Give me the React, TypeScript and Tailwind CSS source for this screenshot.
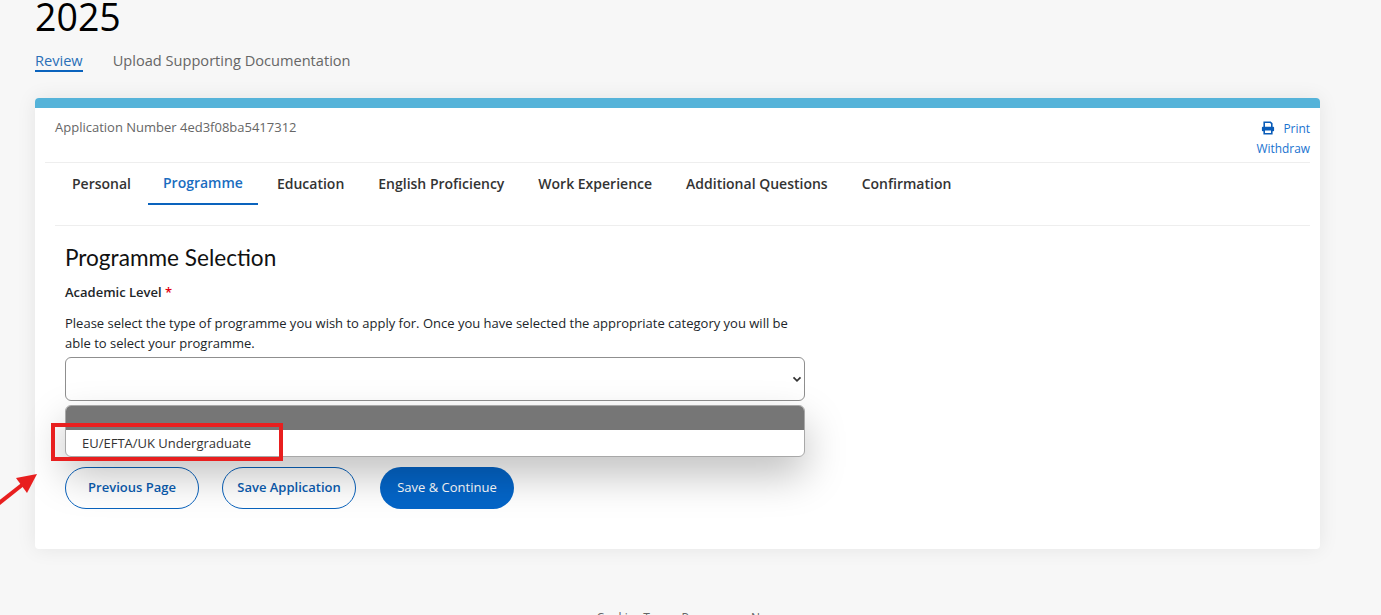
const tabs = ['Personal', 'Programme', 'Education', 'English Proficiency', 'Work Experience', 'Additional Questions', 'Confirmation'];

function PrintIcon() {
    return (
        <svg viewBox="0 0 14 14" className="h-[14px] w-[14px] text-[#0a5cb8]" fill="none" stroke="currentColor" strokeWidth="1.6">
            <path d="M3.2 6V1.3h6.2L10.8 2.7V6" />
            <rect x="0.9" y="5.8" width="12.2" height="4.4" rx="1" fill="currentColor" stroke="none" />
            <path d="M3.2 8.8h7.6v4H3.2z" fill="#fff" />
        </svg>
    );
}

export default function App() {
    return (
        <div className="relative h-[615px] overflow-hidden bg-[#f7f7f7] font-['Open_Sans',sans-serif] text-[#212529]">
            <div className="px-[35px]">
                <h1 className="-mt-[7px] h-[48px] text-[37.5px] leading-[48px] text-black">2025</h1>
                <nav className="mt-[10px] flex h-[23px] items-start gap-[30px] text-[14.6px] leading-[20px]">
                    <a className="h-[21px] border-b-2 border-[#0a63bd] leading-[18px] text-[#2a6fb8]">Review</a>
                    <a className="leading-[18px] text-[#666]">Upload Supporting Documentation</a>
                </nav>

                <section className="mt-[24px] h-[451px] w-[1285px] overflow-hidden rounded-[4px] bg-white shadow-[0_0_20px_rgba(0,0,0,0.08)]">
                    <div className="h-[10px] bg-[#55b3d9]"></div>
                    <div className="mx-[10px] flex h-[55px] justify-between border-b border-[#eeeeee] pl-[10px]">
                        <p className="pt-[10px] text-[13px] leading-[18px] text-[#666]">Application Number 4ed3f08ba5417312</p>
                        <div className="flex flex-col items-end pt-[11px] text-[11.9px] leading-[18px] text-[#1a73d0]">
                            <a className="flex items-center gap-[8px]"><PrintIcon />Print</a>
                            <a className="mt-[2px]">Withdraw</a>
                        </div>
                    </div>

                    <div className="ml-[20px] mr-[10px] flex h-[63px] border-b border-[#eeeeee]">
                        {tabs.map((t) => (
                            <a
                                key={t}
                                className={t === 'Programme'
                                    ? 'mr-[2px] h-[42px] border-b-2 border-[#0a63bd] px-[15px] pt-[10px] text-[14px] leading-[20px] font-semibold text-[#1a6dc0]'
                                    : 'h-[42px] px-[17px] pt-[11px] text-[14px] leading-[20px] font-semibold text-[#333]'}
                            >
                                {t}
                            </a>
                        ))}
                    </div>

                    <div className="relative px-[30px]">
                        <h2 className="mt-[18px] text-[22.6px] leading-[28px] text-[#111] font-['Lato',sans-serif]">Programme Selection</h2>
                        <p className="mt-[11px] text-[13px] leading-[18px] font-semibold text-[#212529]">Academic Level <span className="text-[#e3000f]">*</span></p>
                        <p className="mt-[13px] w-[740px] text-[13px] leading-[19.5px] text-[#212529]">Please select the type of programme you wish to apply for. Once you have selected the appropriate category you will be able to select your programme.</p>
                        <div className="mt-[4px] flex h-[44px] w-[740px] items-center justify-end rounded-[6px] border border-[#8f8f8f] bg-white pr-[2px]">
                            <svg viewBox="0 0 10 8" className="h-[7px] w-[10px]" fill="none" stroke="#333" strokeWidth="2"><path d="M1 1.5l4 4 4-4" /></svg>
                        </div>

                        <div className="mt-[66px] flex gap-[23px] text-[13px] font-semibold">
                            <button className="h-[42px] w-[134px] rounded-full border border-[#0a63bd] bg-white text-[#0a5cb0]">Previous Page</button>
                            <button className="h-[42px] w-[134px] rounded-full border border-[#0a63bd] bg-white text-[#0a5cb0]">Save Application</button>
                            <button className="ml-[1px] h-[42px] w-[134px] rounded-full bg-[#0465c8] font-normal text-white">Save &amp; Continue</button>
                        </div>
                    </div>
                </section>

                <footer className="mt-[60px] text-center text-[12px] text-[#666]">Cookies Terms Programme Name</footer>
            </div>

            {/* open select list */}
            <div className="absolute left-[65px] top-[405px] h-[52px] w-[740px] overflow-hidden rounded-[6px] border border-[#a8a8a8] bg-white shadow-[0_18px_40px_rgba(0,0,0,0.25)]">
                <div className="h-[24px] bg-[#767676]"></div>
                <div className="pl-[16px] pt-[4px] text-[13px] leading-[18px] text-[#333]">EU/EFTA/UK Undergraduate</div>
            </div>

            {/* annotation */}
            <div className="absolute left-[51px] top-[423px] h-[38px] w-[232px] border-[4px] border-[#e81f1f]"></div>
            <svg className="absolute left-0 top-[470px] h-[40px] w-[40px]" viewBox="0 0 40 40">
                <path d="M-2 34L22 15" stroke="#e81f1f" strokeWidth="4" />
                <path d="M37 4L16 8L27 23Z" fill="#e81f1f" />
            </svg>
        </div>
    );
}
